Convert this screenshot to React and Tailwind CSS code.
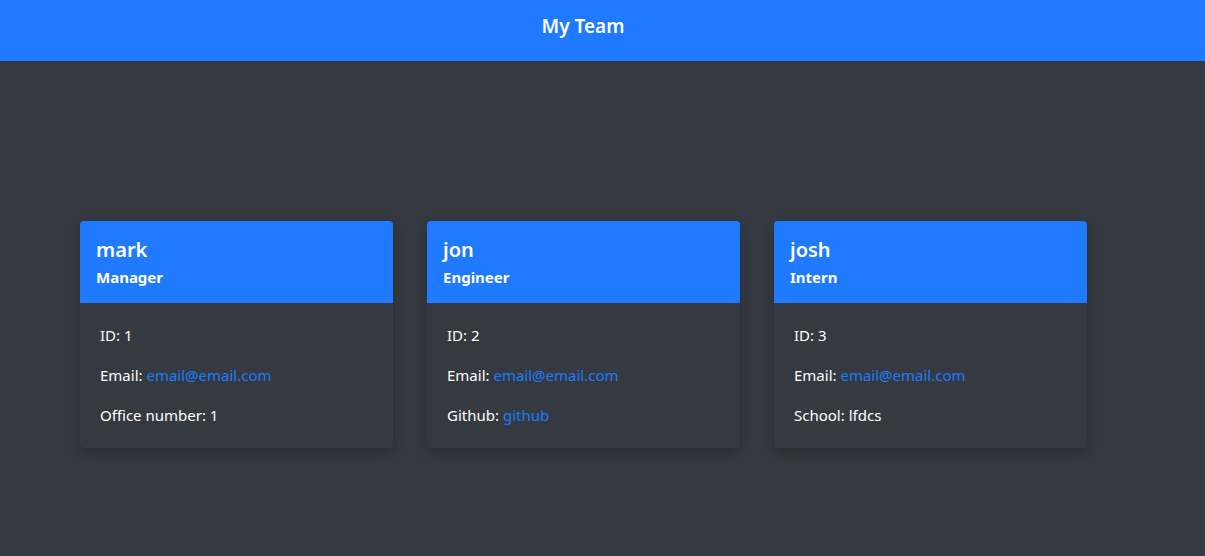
import React from "react";

const team = [
  { name: "mark", role: "Manager", id: 1, email: "email@email.com", extraLabel: "Office number", extra: "1" },
  { name: "jon", role: "Engineer", id: 2, email: "email@email.com", extraLabel: "Github", extra: "github", link: true },
  { name: "josh", role: "Intern", id: 3, email: "email@email.com", extraLabel: "School", extra: "lfdcs" },
];

const EmployeeCard = ({ emp }) => (
  <div className="w-[313px] rounded-[4px] bg-[#343a40] shadow-[0_4px_12px_rgba(0,0,0,0.25)] overflow-hidden">
    {/* Header */}
    <div className="bg-[#1f7aff] h-[82px] px-4 pt-[17px] text-white">
      <h2 className="text-[20px] font-semibold leading-[24px]">{emp.name}</h2>
      <h3 className="text-[15px] font-bold leading-[20px] mt-[5px]">{emp.role}</h3>
    </div>

    {/* Body */}
    <div className="px-5 pt-[22px] pb-[23px] text-[15px] text-white leading-[20px] flex flex-col gap-5">
      <p>ID: {emp.id}</p>
      <p>
        Email: <a href="#" className="text-[#1f7aff]">{emp.email}</a>
      </p>
      <p>
        {emp.extraLabel}:{" "}
        {emp.link ? <a href="#" className="text-[#1f7aff]">{emp.extra}</a> : emp.extra}
      </p>
    </div>
  </div>
);

export default function App() {
  return (
    <div className="min-h-[556px] bg-[#343a40] font-['Noto_Sans',sans-serif]">
      {/* Top Bar */}
      <div className="bg-[#1f7aff] h-[61px] flex items-center justify-center pr-[39px] pb-[8px]">
        <h1 className="text-[19px] font-semibold text-white">My Team</h1>
      </div>

      {/* Cards */}
      <div className="flex gap-[34px] pl-[80px] pt-[160px]">
        {team.map((emp) => (
          <EmployeeCard key={emp.id} emp={emp} />
        ))}
      </div>
    </div>
  );
}
